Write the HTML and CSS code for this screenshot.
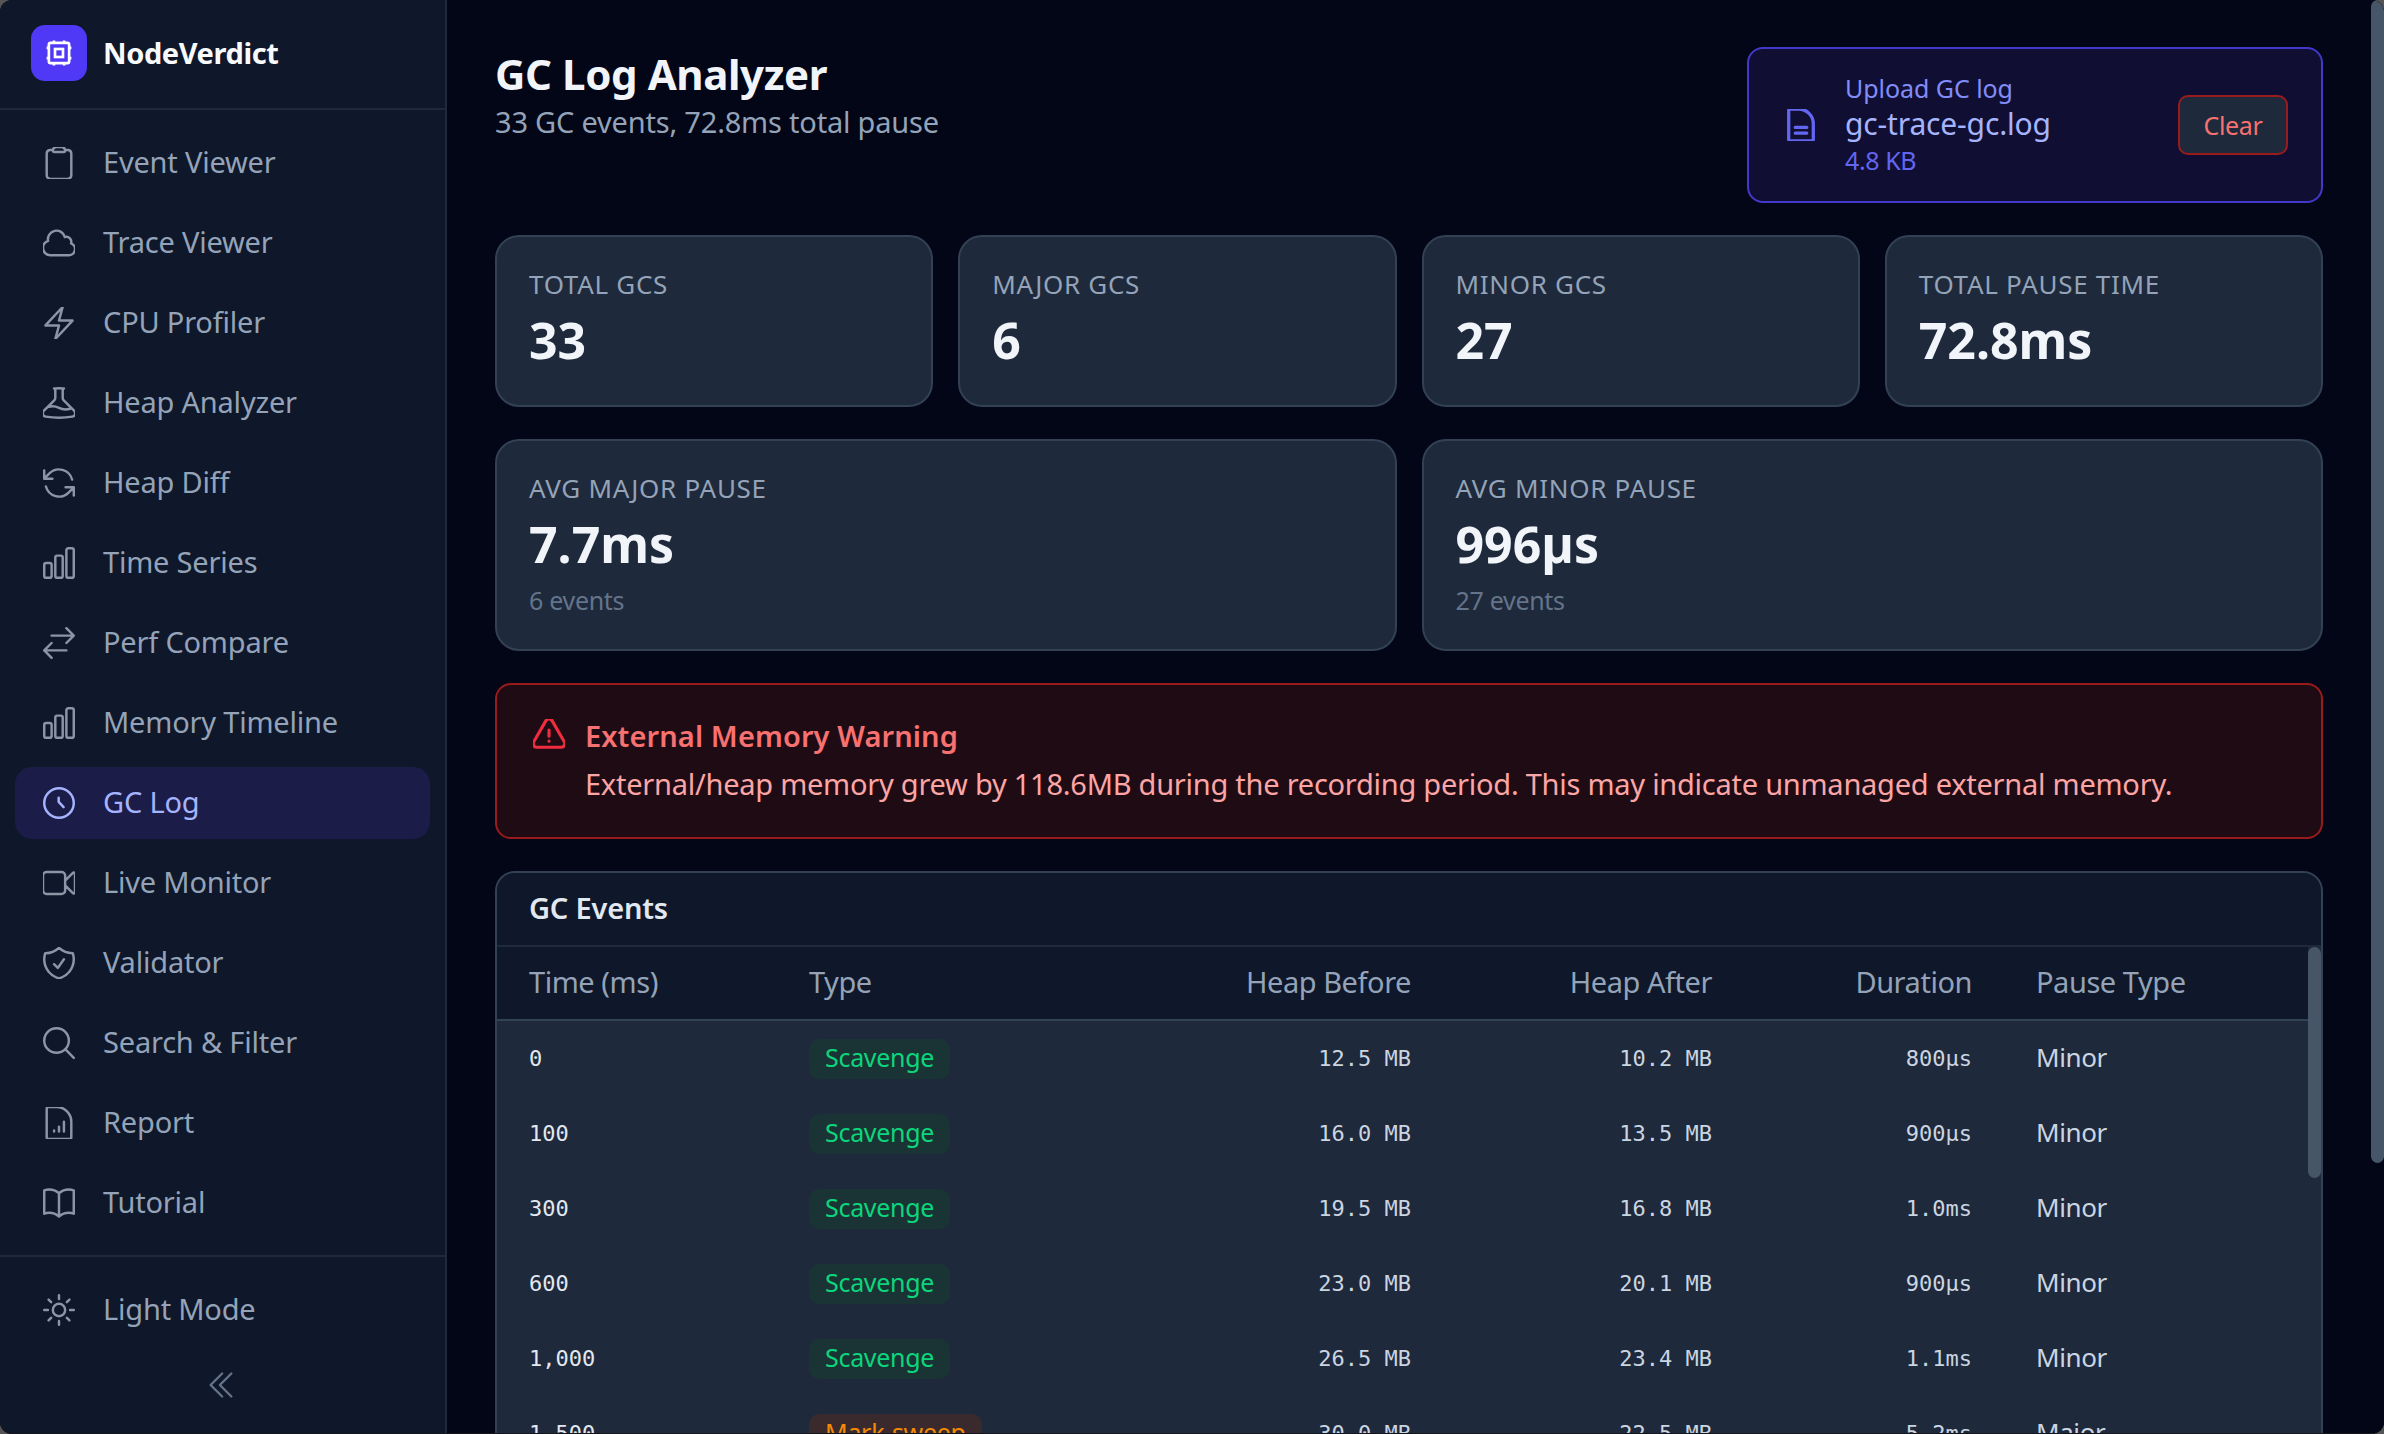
FILE: index.html
```html
<!DOCTYPE html>
<html lang="en">
  <head>
    <meta charset="UTF-8" />
    <meta name="viewport" content="width=device-width, initial-scale=1.0" />
    <title>NodeVerdict - GC Log</title>
    <link rel="stylesheet" href="styles.css">
  </head>
  <body>
    <div class="app">
      <aside class="sidebar">
        <div class="brand">
          <span class="brand-logo">
            <svg viewBox="0 0 24 24" class="icon-logo"><rect x="4.4" y="4.4" width="15.2" height="15.2" rx="1.2"/><rect x="9" y="9" width="6" height="6"/><path d="M8.2 2.7v1.7M15.800 2.7v1.700M8.200 19.600v1.700M15.800 19.600v1.700M2.700 8.200h1.700M2.700 15.800h1.700M19.600 8.200h1.700M19.600 15.800h1.700"/></svg>
          </span>
          <span class="brand-name">NodeVerdict</span>
        </div>
        <nav class="nav">
          <a class="nav-item"><svg viewBox="2.25 2.25 19.5 19.5" class="icon"><path d="M15.666 3.888A2.25 2.25 0 0 0 13.5 2.25h-3c-1.03 0-1.9.693-2.166 1.638m7.332 0c.055.194.084.4.084.612v0a.75.75 0 0 1-.75.75H9a.75.75 0 0 1-.75-.75v0c0-.212.03-.418.084-.612m7.332 0c.646.049 1.288.11 1.927.184 1.1.128 1.907 1.077 1.907 2.185V19.5a2.25 2.25 0 0 1-2.25 2.25H6.75A2.25 2.25 0 0 1 4.5 19.5V6.257c0-1.108.806-2.057 1.907-2.185a48.208 48.208 0 0 1 1.927-.184"/></svg><span class="nav-text">Event Viewer</span></a>
          <a class="nav-item"><svg viewBox="2.25 2.25 19.5 19.5" class="icon"><path d="M2.25 15a4.5 4.5 0 0 0 4.5 4.5H18a3.75 3.75 0 0 0 1.332-7.257 3 3 0 0 0-3.758-3.848 5.25 5.25 0 0 0-10.233 2.33A4.502 4.502 0 0 0 2.25 15Z"/></svg><span class="nav-text">Trace Viewer</span></a>
          <a class="nav-item"><svg viewBox="2.25 2.25 19.5 19.5" class="icon"><path d="m3.75 13.5 10.5-11.25L12 10.5h8.25L9.75 21.75 12 13.5H3.75Z"/></svg><span class="nav-text">CPU Profiler</span></a>
          <a class="nav-item"><svg viewBox="2.25 2.25 19.5 19.5" class="icon"><path d="M9.75 3.104v5.714a2.25 2.25 0 0 1-.659 1.591L5 14.5M9.75 3.104c-.251.023-.501.05-.75.082m.75-.082a24.301 24.301 0 0 1 4.5 0m0 0v5.714c0 .597.237 1.17.659 1.591L19.8 15.3M14.25 3.104c.251.023.501.05.75.082M19.8 15.3l-1.57.393A9.065 9.065 0 0 1 12 15a9.065 9.065 0 0 0-6.23-.693L5 14.5m14.8.8 1.402 1.402c1.232 1.232.65 3.318-1.067 3.611A48.309 48.309 0 0 1 12 21c-2.773 0-5.491-.235-8.135-.687-1.718-.293-2.3-2.379-1.067-3.611L5 14.5"/></svg><span class="nav-text">Heap Analyzer</span></a>
          <a class="nav-item"><svg viewBox="2.25 2.25 19.5 19.5" class="icon"><path transform="translate(24 0) scale(-1 1)" d="M16.023 9.348h4.992v-.001M2.985 19.644v-4.992m0 0h4.992m-4.993 0 3.181 3.183a8.25 8.25 0 0 0 13.803-3.7M4.031 9.865a8.25 8.25 0 0 1 13.803-3.7l3.181 3.182m0-4.991v4.99"/></svg><span class="nav-text">Heap Diff</span></a>
          <a class="nav-item"><svg viewBox="2.25 2.25 19.5 19.5" class="icon"><path d="M3 13.125C3 12.504 3.504 12 4.125 12h2.25c.621 0 1.125.504 1.125 1.125v6.75C7.5 20.496 6.996 21 6.375 21h-2.25A1.125 1.125 0 0 1 3 19.875v-6.75ZM9.75 8.625c0-.621.504-1.125 1.125-1.125h2.25c.621 0 1.125.504 1.125 1.125v11.25c0 .621-.504 1.125-1.125 1.125h-2.25a1.125 1.125 0 0 1-1.125-1.125V8.625ZM16.5 4.125c0-.621.504-1.125 1.125-1.125h2.25C20.496 3 21 3.504 21 4.125v15.75c0 .621-.504 1.125-1.125 1.125h-2.25a1.125 1.125 0 0 1-1.125-1.125V4.125Z"/></svg><span class="nav-text">Time Series</span></a>
          <a class="nav-item"><svg viewBox="2.25 2.25 19.5 19.5" class="icon"><path d="M7.5 21 3 16.5m0 0L7.5 12M3 16.5h13.5m0-13.500L21 7.500m0 0L16.500 12M21 7.500H7.500"/></svg><span class="nav-text">Perf Compare</span></a>
          <a class="nav-item"><svg viewBox="2.25 2.25 19.5 19.5" class="icon"><path d="M3 13.125C3 12.504 3.504 12 4.125 12h2.25c.621 0 1.125.504 1.125 1.125v6.75C7.5 20.496 6.996 21 6.375 21h-2.25A1.125 1.125 0 0 1 3 19.875v-6.75ZM9.75 8.625c0-.621.504-1.125 1.125-1.125h2.25c.621 0 1.125.504 1.125 1.125v11.25c0 .621-.504 1.125-1.125 1.125h-2.25a1.125 1.125 0 0 1-1.125-1.125V8.625ZM16.5 4.125c0-.621.504-1.125 1.125-1.125h2.25C20.496 3 21 3.504 21 4.125v15.75c0 .621-.504 1.125-1.125 1.125h-2.25a1.125 1.125 0 0 1-1.125-1.125V4.125Z"/></svg><span class="nav-text">Memory Timeline</span></a>
          <a class="nav-item is-active"><svg viewBox="2.25 2.25 19.5 19.5" class="icon"><circle cx="12" cy="12" r="9"/><path d="M11.800 8.800v2.500l3 3.200"/></svg><span class="nav-text">GC Log</span></a>
          <a class="nav-item"><svg viewBox="2.25 2.25 19.5 19.5" class="icon"><path d="m15.75 10.5 4.72-4.72a.75.75 0 0 1 1.28.53v11.38a.75.75 0 0 1-1.28.53l-4.72-4.72M4.5 18.75h9a2.25 2.25 0 0 0 2.25-2.25v-9a2.25 2.25 0 0 0-2.25-2.25h-9A2.25 2.25 0 0 0 2.25 7.5v9a2.25 2.25 0 0 0 2.25 2.25Z"/></svg><span class="nav-text">Live Monitor</span></a>
          <a class="nav-item"><svg viewBox="2.25 2.25 19.5 19.5" class="icon"><path d="M9 12.75 11.25 15 15 9.75m-3-7.036A11.959 11.959 0 0 1 3.598 6 11.99 11.99 0 0 0 3 9.749c0 5.592 3.824 10.29 9 11.623 5.176-1.332 9-6.03 9-11.622 0-1.31-.21-2.571-.598-3.751h-.152c-3.196 0-6.1-1.248-8.25-3.285Z"/></svg><span class="nav-text">Validator</span></a>
          <a class="nav-item"><svg viewBox="2.25 2.25 19.5 19.5" class="icon"><path d="m21 21-5.197-5.197m0 0A7.5 7.5 0 1 0 5.196 5.196a7.5 7.5 0 0 0 10.607 10.607Z"/></svg><span class="nav-text">Search &amp; Filter</span></a>
          <a class="nav-item"><svg viewBox="2.25 2.25 19.5 19.5" class="icon"><path d="M9 16.5v.75m3-3v3m3-6v6M10.5 2.25H5.625c-.621 0-1.125.504-1.125 1.125v17.25c0 .621.504 1.125 1.125 1.125h12.75c.621 0 1.125-.504 1.125-1.125V11.25a9 9 0 0 0-9-9Z"/></svg><span class="nav-text">Report</span></a>
          <a class="nav-item"><svg viewBox="2.25 2.25 19.5 19.5" class="icon"><path d="M12 6.042A8.967 8.967 0 0 0 6 3.75c-1.052 0-2.062.18-3 .512v14.25A8.987 8.987 0 0 1 6 18c2.305 0 4.408.867 6 2.292m0-14.25a8.966 8.966 0 0 1 6-2.292c1.052 0 2.062.18 3 .512v14.25A8.987 8.987 0 0 0 18 18a8.967 8.967 0 0 0-6 2.292m0-14.25v14.25"/></svg><span class="nav-text">Tutorial</span></a>
        </nav>
        <div class="sidebar-foot">
          <a class="nav-item"><svg viewBox="2.25 2.25 19.5 19.5" class="icon"><path d="M12 3v2.25m6.364.386-1.591 1.591M21 12h-2.25m-.386 6.364-1.591-1.591M12 18.75V21m-4.773-4.227-1.591 1.591M5.25 12H3m4.227-4.773L5.636 5.636M15.75 12a3.75 3.75 0 1 1-7.5 0 3.75 3.75 0 0 1 7.5 0Z"/></svg><span class="nav-text">Light Mode</span></a>
          <button class="collapse-btn"><svg viewBox="2.25 2.25 19.5 19.5" class="icon icon-collapse"><path d="m18.75 4.5-7.5 7.5 7.5 7.5m-6-15L5.25 12l7.500 7.500"/></svg></button>
        </div>
      </aside>

      <main class="main">
        <header class="page-head">
          <div>
            <h1 class="page-title">GC Log Analyzer</h1>
            <p class="page-sub">33 GC events, 72.8ms total pause</p>
          </div>
          <div class="upload">
            <svg viewBox="2.25 2.25 19.5 19.5" class="icon icon-file"><path d="M8.500 13.500h7M8.500 17h7M10.500 2.250H5.625c-.621 0-1.125.504-1.125 1.125v17.250c0 .621.504 1.125 1.125 1.125h12.750c.621 0 1.125-.504 1.125-1.125V11.250a9 9 0 0 0-9-9Z"/></svg>
            <div class="upload-text">
              <div class="upload-label">Upload GC log</div>
              <div class="upload-name">gc-trace-gc.log</div>
              <div class="upload-size">4.8 KB</div>
            </div>
            <button class="btn-clear">Clear</button>
          </div>
        </header>

        <section class="stats stats-4">
          <div class="stat"><div class="stat-label">Total GCs</div><div class="stat-value">33</div></div>
          <div class="stat"><div class="stat-label">Major GCs</div><div class="stat-value">6</div></div>
          <div class="stat"><div class="stat-label">Minor GCs</div><div class="stat-value">27</div></div>
          <div class="stat"><div class="stat-label">Total Pause Time</div><div class="stat-value">72.8ms</div></div>
        </section>

        <section class="stats stats-2">
          <div class="stat"><div class="stat-label">Avg Major Pause</div><div class="stat-value">7.7ms</div><div class="stat-note">6 events</div></div>
          <div class="stat"><div class="stat-label">Avg Minor Pause</div><div class="stat-value">996µs</div><div class="stat-note">27 events</div></div>
        </section>

        <section class="alert">
          <svg viewBox="2.25 2.25 19.5 19.5" class="icon icon-alert"><path d="M12 9v3.75m-9.303 3.376c-.866 1.5.217 3.374 1.948 3.374h14.71c1.73 0 2.813-1.874 1.948-3.374L13.949 3.378c-.866-1.5-3.032-1.5-3.898 0L2.697 16.126ZM12 15.750h.007v.008H12v-.008Z"/></svg>
          <div>
            <div class="alert-title">External Memory Warning</div>
            <div class="alert-text">External/heap memory grew by 118.6MB during the recording period. This may indicate unmanaged external memory.</div>
          </div>
        </section>

        <section class="panel">
          <h2 class="panel-title">GC Events</h2>
          <div class="panel-scroll">
            <table class="gc-table">
              <thead>
                <tr>
                  <th class="col-time">Time (ms)</th>
                  <th class="col-type">Type</th>
                  <th class="num col-before">Heap Before</th>
                  <th class="num col-after">Heap After</th>
                  <th class="num col-dur">Duration</th>
                  <th>Pause Type</th>
                </tr>
              </thead>
              <tbody>
                <tr><td class="mono strong">0</td><td><span class="badge badge-minor">Scavenge</span></td><td class="mono num">12.5 MB</td><td class="mono num">10.2 MB</td><td class="mono num">800µs</td><td class="pause">Minor</td></tr>
                <tr><td class="mono strong">100</td><td><span class="badge badge-minor">Scavenge</span></td><td class="mono num">16.0 MB</td><td class="mono num">13.5 MB</td><td class="mono num">900µs</td><td class="pause">Minor</td></tr>
                <tr><td class="mono strong">300</td><td><span class="badge badge-minor">Scavenge</span></td><td class="mono num">19.5 MB</td><td class="mono num">16.8 MB</td><td class="mono num">1.0ms</td><td class="pause">Minor</td></tr>
                <tr><td class="mono strong">600</td><td><span class="badge badge-minor">Scavenge</span></td><td class="mono num">23.0 MB</td><td class="mono num">20.1 MB</td><td class="mono num">900µs</td><td class="pause">Minor</td></tr>
                <tr><td class="mono strong">1,000</td><td><span class="badge badge-minor">Scavenge</span></td><td class="mono num">26.5 MB</td><td class="mono num">23.4 MB</td><td class="mono num">1.1ms</td><td class="pause">Minor</td></tr>
                <tr><td class="mono strong">1,500</td><td><span class="badge badge-major">Mark-sweep</span></td><td class="mono num">30.0 MB</td><td class="mono num">22.5 MB</td><td class="mono num">5.2ms</td><td class="pause">Major</td></tr>
              </tbody>
            </table>
          </div>
          <div class="scroll-thumb panel-thumb"></div>
        </section>
      </main>
      <div class="scroll-thumb page-thumb"></div>
    </div>
  </body>
</html>
```

FILE: styles.css
```css
* {
  box-sizing: border-box;
}
html,
body {
  height: 100%;
  margin: 0;
  background: #555;
}
body {
  font-family: "Noto Sans", "Open Sans", sans-serif;
  overflow: hidden;
}
.app {
  position: relative;
  display: flex;
  height: 1434px;
  border-bottom: 1px solid #14161c;
  border-radius: 12px;
  overflow: hidden;
  background: #020617;
}
.scroll-thumb {
  position: absolute;
  width: 13px;
  border-radius: 7px;
  background: #475569;
}
.page-thumb {
  top: 0;
  right: 0;
  height: 1163px;
}

/* sidebar */
.sidebar {
  display: flex;
  flex-direction: column;
  flex: none;
  width: 447px;
  background: #0f172a;
  border-right: 2px solid #1e293b;
}
.brand {
  display: flex;
  align-items: center;
  gap: 16px;
  height: 110px;
  padding: 0 31px 2px;
  border-bottom: 2px solid #1e293b;
}
.brand-logo {
  display: flex;
  align-items: center;
  justify-content: center;
  width: 56px;
  height: 56px;
  border-radius: 14px;
  background: #4f39f6;
}
.icon-logo {
  width: 32px;
  height: 32px;
  fill: none;
  stroke: #fff;
  stroke-width: 2;
}
.brand-name {
  margin-top: -2px;
  font-size: 29px;
  font-weight: 700;
  color: #f8fafc;
  letter-spacing: -0.4px;
}
.nav {
  display: flex;
  flex-direction: column;
  gap: 8px;
  flex: 1;
  padding: 17px 15px 0;
}
.nav-item {
  display: flex;
  align-items: center;
  gap: 28px;
  height: 72px;
  padding: 0 28px;
  border-radius: 17px;
  font-size: 29px;
  letter-spacing: -0.2px;
  color: #94a3b8;
}
.nav-item.is-active {
  background: #1c1c48;
  color: #a5b4fc;
}
.nav-text {
  margin-top: -3px;
}
.icon {
  flex: none;
  width: 32px;
  height: 32px;
  fill: none;
  stroke: currentColor;
  stroke-width: 1.5;
  stroke-linecap: round;
  stroke-linejoin: round;
}
.nav-item:not(.is-active) .icon {
  stroke: #8b95a5;
}
.sidebar-foot {
  height: 178px;
  padding: 17px 15px 0;
  border-top: 2px solid #1e293b;
}
.collapse-btn {
  display: flex;
  align-items: center;
  justify-content: center;
  width: 100%;
  height: 78px;
  padding: 0 3px 0 0;
  border: 0;
  background: none;
}
.icon-collapse {
  width: 30px;
  height: 30px;
  stroke: #64748b;
}

/* main column */
.main {
  flex: 1;
  min-width: 0;
  padding: 47px 61px 0 48px;
  overflow: hidden;
  background: #020617;
}
.page-head {
  display: flex;
  justify-content: space-between;
  align-items: flex-start;
  margin-bottom: 32px;
}
.page-title {
  margin: 0;
  font-size: 42px;
  line-height: 54px;
  font-weight: 700;
  letter-spacing: -0.4px;
  color: #f1f5f9;
}
.page-sub {
  margin: 1px 0 0;
  font-size: 29px;
  line-height: 40px;
  letter-spacing: -0.2px;
  color: #94a3b8;
}
.upload {
  display: flex;
  align-items: center;
  width: 576px;
  height: 156px;
  padding: 0 33px 0 36px;
  border: 2px solid #4338ca;
  border-radius: 16px;
  background: #100f33;
}
.icon-file {
  margin-right: 28px;
  stroke: #6366f1;
  stroke-width: 2;
}
.upload-text {
  flex: 1;
  margin-top: -3px;
}
.upload-label {
  font-size: 25px;
  line-height: 36px;
  letter-spacing: -0.05px;
  color: #818cf8;
}
.upload-name {
  font-size: 30px;
  line-height: 36px;
  letter-spacing: -0.15px;
  color: #a5b4fc;
}
.upload-size {
  font-size: 25px;
  line-height: 36px;
  letter-spacing: -0.4px;
  color: #6366f1;
}
.btn-clear {
  width: 110px;
  height: 60px;
  padding: 0;
  border: 2px solid #991b1b;
  border-radius: 10px;
  background: #1e293b;
  font: inherit;
  font-size: 25px;
  letter-spacing: -0.3px;
  color: #f87171;
}

/* stat cards */
.stats {
  display: grid;
  gap: 25px;
  margin-bottom: 32px;
}
.stats-4 {
  grid-template-columns: repeat(4, 1fr);
}
.stats-2 {
  grid-template-columns: repeat(2, 1fr);
}
.stat {
  padding: 29px 32px 0;
  height: 172px;
  border: 2px solid #334155;
  border-radius: 24px;
  background: #1e293b;
}
.stats-2 .stat {
  height: 212px;
}
.stat-label {
  font-size: 26px;
  line-height: 36px;
  letter-spacing: 0.7px;
  text-transform: uppercase;
  color: #94a3b8;
}
.stat-value {
  margin-top: 5px;
  font-size: 50px;
  line-height: 66px;
  font-weight: 700;
  letter-spacing: 0;
  color: #f1f5f9;
}
.stat-note {
  margin-top: 5px;
  font-size: 25px;
  line-height: 36px;
  letter-spacing: -0.3px;
  color: #64748b;
}

/* alert */
.alert {
  display: flex;
  gap: 20px;
  height: 156px;
  padding: 28px 36px;
  margin-bottom: 32px;
  border: 2px solid #991b1b;
  border-radius: 16px;
  background: #1f0b14;
}
.icon-alert {
  margin-top: 6px;
  stroke: #ef2d3f;
  stroke-width: 1.9;
}
.alert-title {
  font-size: 29px;
  line-height: 46px;
  font-weight: 600;
  letter-spacing: 0.1px;
  color: #f87171;
}
.alert-text {
  font-size: 29px;
  line-height: 50px;
  letter-spacing: -0.25px;
  color: #fca5a5;
}

/* events table */
.panel {
  position: relative;
  border: 2px solid #334155;
  border-radius: 20px;
  overflow: hidden;
  background: #1e293b;
}
.panel-title {
  margin: 0;
  height: 74px;
  padding: 0 32px;
  font-size: 29px;
  line-height: 70px;
  font-weight: 600;
  letter-spacing: -0.2px;
  color: #e2e8f0;
  background: #0f172a;
  border-bottom: 2px solid #1e293b;
}
.panel-scroll {
  height: 767px;
  padding-right: 13px;
  overflow: hidden;
}
.panel-thumb {
  top: 74px;
  right: 0;
  height: 231px;
}
.gc-table {
  width: 100%;
  border-collapse: separate;
  border-spacing: 0;
  table-layout: fixed;
}
.gc-table th {
  height: 74px;
  padding: 0 32px 3px;
  font-size: 29px;
  font-weight: 400;
  letter-spacing: -0.45px;
  text-align: left;
  color: #94a3b8;
  background: #0f172a;
  border-bottom: 2px solid #334155;
}
.gc-table th.num {
  text-align: right;
}
.gc-table td {
  height: 75px;
  padding: 0 32px;
  font-size: 26px;
  letter-spacing: -0.4px;
  color: #cbd5e1;
}
.gc-table td.pause {
  padding-bottom: 3px;
}
.gc-table .num {
  text-align: right;
}
.col-time {
  width: 280px;
}
.col-type {
  width: 338px;
}
.col-before {
  width: 328px;
}
.col-after {
  width: 301px;
}
.col-dur {
  width: 260px;
}
.gc-table .mono {
  font-family: "DejaVu Sans Mono", monospace;
  font-size: 22px;
  letter-spacing: 0;
}
.gc-table .strong {
  color: #e2e8f0;
}
.badge {
  display: inline-block;
  height: 40px;
  padding: 0 16px;
  border-radius: 10px;
  font-size: 25px;
  line-height: 37px;
  letter-spacing: -0.3px;
}
.badge-minor {
  background: #1a3335;
  color: #0cd67c;
}
.badge-major {
  background: #3a2a2d;
  color: #f58a07;
}
```
